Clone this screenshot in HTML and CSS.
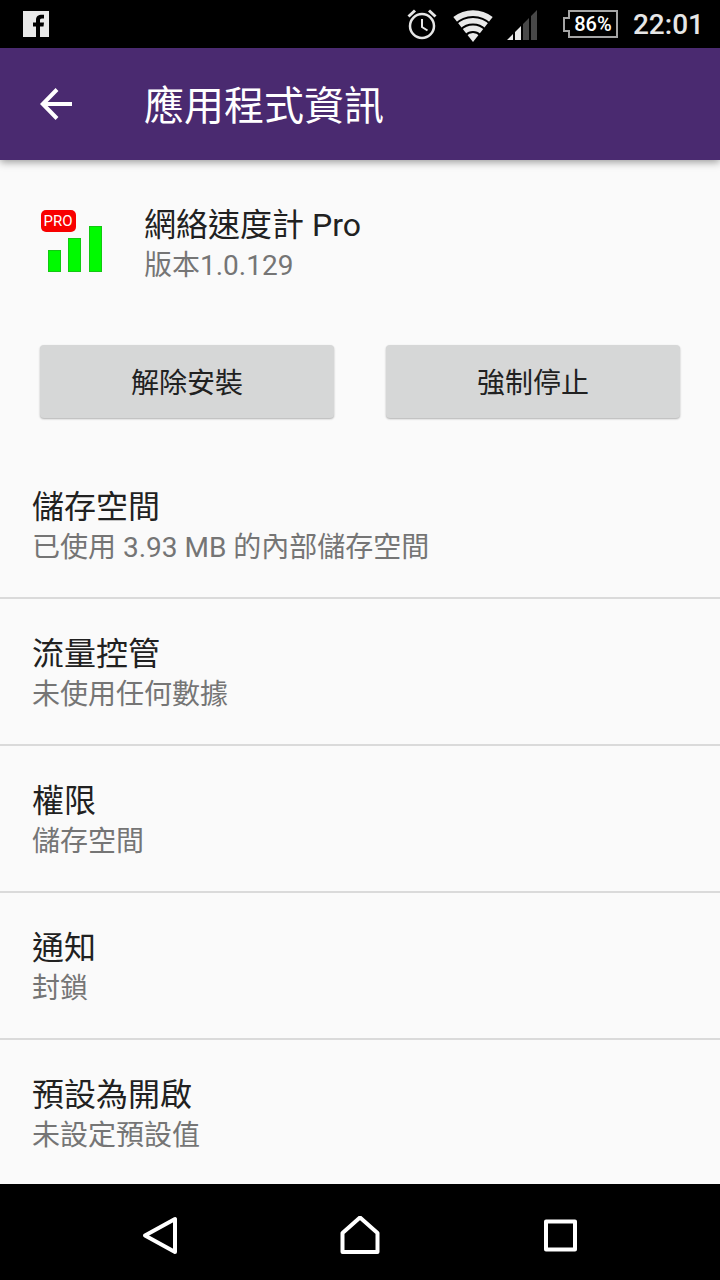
FILE: index.html
```html
<!DOCTYPE html>
<html lang="zh-Hant">
<head>
    <meta charset="UTF-8">
    <meta name="viewport" content="width=device-width, initial-scale=1.0">
    <title>應用程式資訊</title>
    <link rel="stylesheet" href="styles.css">
</head>
<body>
    <!-- Status bar -->
    <div class="statusBar">
        <svg width="28" height="28" viewBox="0 0 28 28">
            <rect x="1" y="1" width="26" height="26" fill="#e9e9e9"/>
            <path d="M14 27V16.500h-3v-4h3v-2.500C14 6 16.500 4.300 22 4.800V8.500h-2c-1.700 0-2 .7-2 2v2h4l-.5 4H18V27z" fill="#000"/>
        </svg>
        <div class="statusIcons">
            <svg width="30" height="32" viewBox="0 0 30 32" fill="none" stroke="#e6e6e6">
                <circle cx="15" cy="18" r="12" stroke-width="2.500"/>
                <path d="M15 11v8l5.500 3.500" stroke-width="2"/>
                <path d="M1.500 8.500l6.500-6M28.500 8.500L22 2.500" stroke-width="3"/>
            </svg>
            <svg class="wifiIcon" width="40" height="36" viewBox="0 0 40 36">
                <path d="M20 36L.3 11A32 32 0 0 1 39.700 11z" fill="#e9e9e9"/>
                <g fill="none" stroke="#000" stroke-width="2">
                    <circle cx="20" cy="36" r="25"/>
                    <circle cx="20" cy="36" r="17.500"/>
                    <circle cx="20" cy="36" r="10"/>
                </g>
            </svg>
            <svg class="signalIcon" width="32" height="32" viewBox="0 0 32 32">
                <path d="M0 32l6-6v6zM8 24l6-6v14H8z" fill="#e9e9e9"/>
                <path d="M16 16l6-6v22h-6zM24 8l6-6v30h-6z" fill="#484848"/>
            </svg>
            <span class="battery">
                <svg width="56" height="29" viewBox="0 0 56 29" fill="none" stroke="#a5a5a5" stroke-width="2">
                    <path d="M6 1h48v26H6v-6H1V8h5z"/>
                </svg>
                <span class="batteryLevel">86%</span>
            </span>
            <span class="clock">22:01</span>
        </div>
    </div>

    <!-- App bar -->
    <header class="appBar">
        <button type="button" aria-label="返回">
            <svg width="32" height="32" viewBox="0 0 32 32" fill="none" stroke="#fff" stroke-width="4">
                <path d="M32 16H4M17 1.500L2.800 16 17 30.500"/>
            </svg>
        </button>
        <h1>應用程式資訊</h1>
    </header>

    <main>
        <section class="appInfo">
            <svg width="64" height="72" viewBox="0 0 64 72">
                <rect x="1" y="1" width="35" height="22" rx="5" fill="#f80000"/>
                <text class="proLabel" x="18" y="17" text-anchor="middle">PRO</text>
                <g fill="#00fa00" stroke="#12c812">
                    <rect x="8.500" y="41.500" width="12" height="21"/>
                    <rect x="28.500" y="29.500" width="12" height="33"/>
                    <rect x="49.500" y="17.500" width="12" height="45"/>
                </g>
            </svg>
            <div>
                <h2 class="itemTitle">網絡速度計 Pro</h2>
                <p class="itemSummary">版本1.0.129</p>
            </div>
        </section>

        <div class="actions">
            <button type="button">解除安裝</button>
            <button type="button">強制停止</button>
        </div>

        <!-- Settings list -->
        <ul class="settingsList">
            <li>
                <h2 class="itemTitle">儲存空間</h2>
                <p class="itemSummary">已使用 3.93 MB 的內部儲存空間</p>
            </li>
            <li>
                <h2 class="itemTitle">流量控管</h2>
                <p class="itemSummary">未使用任何數據</p>
            </li>
            <li>
                <h2 class="itemTitle">權限</h2>
                <p class="itemSummary">儲存空間</p>
            </li>
            <li>
                <h2 class="itemTitle">通知</h2>
                <p class="itemSummary">封鎖</p>
            </li>
            <li>
                <h2 class="itemTitle">預設為開啟</h2>
                <p class="itemSummary">未設定預設值</p>
            </li>
        </ul>
    </main>

    <!-- Navigation bar -->
    <nav class="navBar">
        <button type="button" aria-label="返回">
            <svg width="40" height="40" viewBox="0 0 40 40">
                <path d="M35 3v33L5 19.500z"/>
            </svg>
        </button>
        <button type="button" aria-label="主畫面">
            <svg width="40" height="40" viewBox="0 0 40 40">
                <path d="M2.500 17L20 1.500 37.500 17v19h-35z"/>
            </svg>
        </button>
        <button type="button" aria-label="最近使用">
            <svg width="40" height="40" viewBox="0 0 40 40">
                <path d="M6 5.500h29v28H6z"/>
            </svg>
        </button>
    </nav>
</body>
</html>
```

FILE: styles.css
```css
* {
    box-sizing: border-box;
}

body {
    display: flex;
    flex-direction: column;
    height: 100vh;
    margin: 0;
    background-color: #fafafa;
    color: #212121;
    font-family: Roboto, "Noto Sans CJK TC", sans-serif;
}

h1,
h2,
p,
ul {
    margin: 0;
    padding: 0;
    font-weight: 400;
}

svg {
    display: block;
    flex-shrink: 0;
}

button {
    padding: 0;
    border: none;
    background: none;
    color: inherit;
    font-family: inherit;
    cursor: pointer;
}

/* Status bar */
.statusBar {
    display: flex;
    align-items: center;
    justify-content: space-between;
    flex-shrink: 0;
    height: 48px;
    padding: 0 16px 0 22px;
    background-color: #000;
    color: #e6e6e6;
}

.statusIcons {
    display: flex;
    align-items: center;
}

.wifiIcon {
    margin-left: 16px;
}

.signalIcon {
    margin-left: 14px;
}

.battery {
    position: relative;
    margin-left: 24px;
}

.batteryLevel {
    position: absolute;
    top: 0;
    left: 6px;
    width: 48px;
    color: #fff;
    font-size: 20px;
    font-weight: 500;
    line-height: 28px;
    text-align: center;
}

.clock {
    margin-left: 14px;
    padding-top: 2px;
    font-size: 28px;
    font-weight: 500;
    line-height: 48px;
}

/* App bar */
.appBar {
    display: flex;
    align-items: center;
    flex-shrink: 0;
    gap: 72px;
    height: 112px;
    padding: 0 40px;
    background-color: #4a2a70;
    box-shadow: 0 2px 8px rgba(0, 0, 0, 0.4);
    color: #fff;
    z-index: 1;
}

.appBar h1 {
    padding-bottom: 2px;
    font-size: 40px;
}

/* App details */
main {
    flex: 1;
    min-height: 0;
    overflow: hidden;
}

.appInfo {
    display: flex;
    align-items: center;
    gap: 40px;
    padding: 44px 40px 0;
}

.proLabel {
    fill: #fff;
    font-size: 15px;
}

.itemTitle {
    font-size: 32px;
    line-height: 42px;
}

.itemSummary {
    color: #757575;
    font-size: 28px;
    line-height: 40px;
}

.actions {
    display: flex;
    gap: 52px;
    padding: 59px 40px 34px;
}

.actions button {
    flex: 1;
    height: 73px;
    padding-bottom: 2px;
    border-radius: 4px;
    background-color: #d6d7d7;
    box-shadow: 0 1px 2px rgba(0, 0, 0, 0.3);
    font-size: 28px;
}

.settingsList {
    list-style: none;
}

.settingsList li {
    padding: 34px 32px 29px;
    border-bottom: 2px solid #dadada;
}

/* Navigation bar */
.navBar {
    display: flex;
    align-items: center;
    justify-content: center;
    flex-shrink: 0;
    gap: 160px;
    height: 96px;
    padding-top: 8px;
    background-color: #000;
}

.navBar path {
    fill: none;
    stroke: #fff;
    stroke-width: 4;
    stroke-linejoin: round;
}
```
